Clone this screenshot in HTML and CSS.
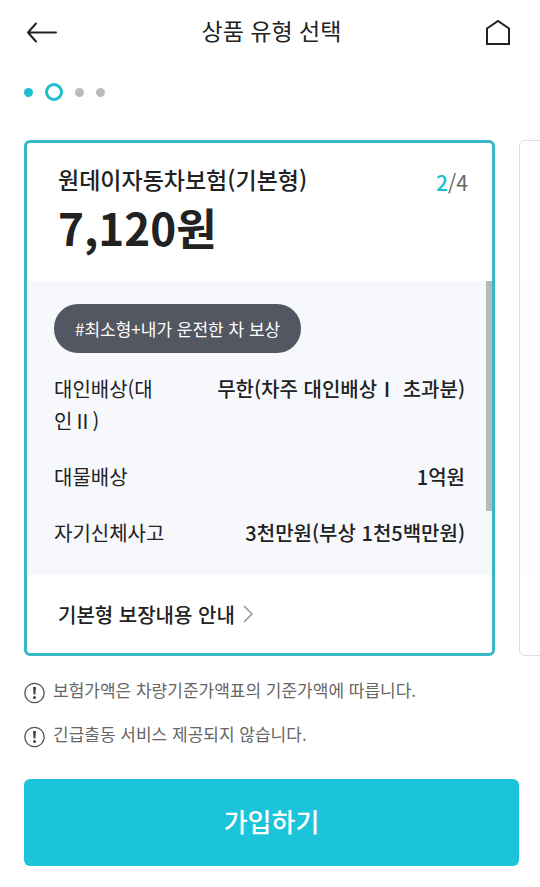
FILE: index.html
```html
<!DOCTYPE html>
<html lang="ko">
<head>
<meta charset="utf-8">
<meta name="viewport" content="width=device-width, initial-scale=1">
<title>상품 유형 선택</title>
<link rel="stylesheet" href="styles.css">
</head>
<body>
<header class="header">
  <button class="icon-button" type="button" aria-label="뒤로">
    <svg width="32" height="24" viewBox="0 0 32 24" fill="none" stroke="#222" stroke-width="2" stroke-linecap="round"><path d="M30 12.500H2M10 3.500L2 12.500L10 21.500" stroke-linejoin="round"/></svg>
  </button>
  <h1 class="header-title">상품 유형 선택</h1>
  <a class="icon-button" href="#" aria-label="홈">
    <svg width="26" height="26" viewBox="0 0 26 26" fill="none" stroke="#222" stroke-width="2"><path d="M2 9.500L13 2L24 9.500V25H2Z"/></svg>
  </a>
</header>
<main>
  <div class="steps">
    <span class="dot dot-done"></span>
    <span class="dot dot-current"></span>
    <span class="dot"></span>
    <span class="dot"></span>
  </div>
  <div class="carousel">
    <section class="card card-active">
      <div class="card-head">
        <div>
          <h2 class="card-title">원데이자동차보험(기본형)</h2>
          <p class="price">7,120원</p>
        </div>
        <p class="count"><b class="count-now">2</b>/4</p>
      </div>
      <div class="details">
        <span class="tag">#최소형+내가 운전한 차 보상</span>
        <dl class="coverage">
          <div class="row"><dt>대인배상(대인Ⅱ)</dt><dd>무한(차주 대인배상Ⅰ 초과분)</dd></div>
          <div class="row"><dt>대물배상</dt><dd>1억원</dd></div>
          <div class="row"><dt>자기신체사고</dt><dd>3천만원(부상 1천5백만원)</dd></div>
        </dl>
        <span class="scroll-thumb"></span>
      </div>
      <a class="guide" href="#">기본형 보장내용 안내
        <svg width="10" height="18" viewBox="0 0 10 18" fill="none" stroke="#888" stroke-width="1.300"><path d="M1 1L9 9L1 17"/></svg>
      </a>
    </section>
    <section class="card"><div class="card-next"></div></section>
  </div>
  <ul class="notices">
    <li><svg width="22" height="22" viewBox="0 0 22 22"><circle cx="10.500" cy="11" r="9.700" fill="none" stroke="#555" stroke-width="1.300"/><path d="M9 5h3l-.6 7.500h-1.800z" fill="#444"/><circle cx="10.500" cy="15.500" r="1.500" fill="#444"/></svg><span>보험가액은 차량기준가액표의 기준가액에 따릅니다.</span></li>
    <li><svg width="22" height="22" viewBox="0 0 22 22"><circle cx="10.500" cy="11" r="9.700" fill="none" stroke="#555" stroke-width="1.300"/><path d="M9 5h3l-.6 7.500h-1.800z" fill="#444"/><circle cx="10.500" cy="15.500" r="1.500" fill="#444"/></svg><span>긴급출동 서비스 제공되지 않습니다.</span></li>
  </ul>
  <div class="action">
    <button class="join" type="button">가입하기</button>
  </div>
</main>
</body>
</html>
```
FILE: styles.css
```css
* { box-sizing: border-box; }
body, h1, h2, p, dl, dd, ul { margin: 0; padding: 0; }
body {
  background: #fff;
  color: #222;
  font-family: "Noto Sans CJK KR", sans-serif;
  overflow-x: hidden;
}
.header {
  display: flex;
  align-items: center;
  justify-content: space-between;
  height: 64px;
  padding: 0 29px 0 26px;
}
.icon-button {
  display: flex;
  padding: 0;
  border: 0;
  background: none;
}
.header-title {
  padding-bottom: 4px;
  font-size: 23px;
  font-weight: 400;
  line-height: 32px;
}
.steps {
  display: flex;
  align-items: center;
  gap: 12px;
  height: 20px;
  margin: 18px 24px 38px;
}
.dot {
  width: 9px;
  height: 9px;
  border-radius: 50%;
  background: #bbb;
}
.dot-done { background: #1bbfcf; }
.dot-current {
  width: 18px;
  height: 18px;
  border: 3px solid #1bbfcf;
  background: #fff;
}
.carousel {
  display: flex;
  gap: 24px;
  padding-left: 24px;
  overflow: hidden;
}
.card {
  flex: 0 0 calc(100% - 45px);
  border: 1px solid #ddd;
  border-radius: 6px;
  overflow: hidden;
}
.card-active { border: 3px solid #36b8c5; }
.card-head {
  display: flex;
  justify-content: space-between;
  height: 138px;
  padding: 20px 24px 0 31px;
}
.card-title {
  font-size: 23px;
  font-weight: 500;
  line-height: 32px;
}
.price {
  font-size: 44px;
  font-weight: 700;
  line-height: 64px;
}
.count {
  color: #666;
  font-size: 21px;
  line-height: 38px;
}
.count-now {
  color: #1bbfcf;
  font-weight: 500;
}
.details {
  position: relative;
  padding: 23px 27px 26px;
  background: #f7f8fc;
}
.tag {
  display: inline-block;
  padding: 0 21px;
  border-radius: 24px;
  background: #535761;
  color: #fff;
  font-size: 17px;
  line-height: 49px;
  vertical-align: top;
}
.coverage {
  display: grid;
  gap: 24px;
  margin-top: 20px;
}
.row {
  display: flex;
  justify-content: space-between;
  font-size: 20px;
  line-height: 32px;
}
.row dt {
  width: 120px;
  padding-right: 8px;
  word-break: break-all;
}
.row dd {
  font-weight: 500;
}
.scroll-thumb {
  position: absolute;
  top: 0;
  right: 0;
  width: 6px;
  height: 230px;
  background: #b3bcbc;
}
.guide {
  display: flex;
  align-items: center;
  gap: 8px;
  height: 78px;
  padding-left: 31px;
  color: #222;
  font-size: 20px;
  font-weight: 500;
  text-decoration: none;
}
.card-next {
  height: 294px;
  margin-top: 140px;
  background: #fdfdfe;
}
.notices {
  display: grid;
  gap: 16px;
  margin: 20px 24px 0;
  list-style: none;
}
.notices li {
  display: flex;
  align-items: flex-end;
  gap: 7px;
  color: #666;
  font-size: 17px;
  line-height: 28px;
}
.action { padding: 31px 21px 20px 24px; }
.join {
  width: 100%;
  height: 87px;
  padding: 0 0 4px;
  border: 0;
  border-radius: 6px;
  background: #1bc4da;
  color: #fff;
  font-family: inherit;
  font-size: 26px;
  font-weight: 500;
}
```
